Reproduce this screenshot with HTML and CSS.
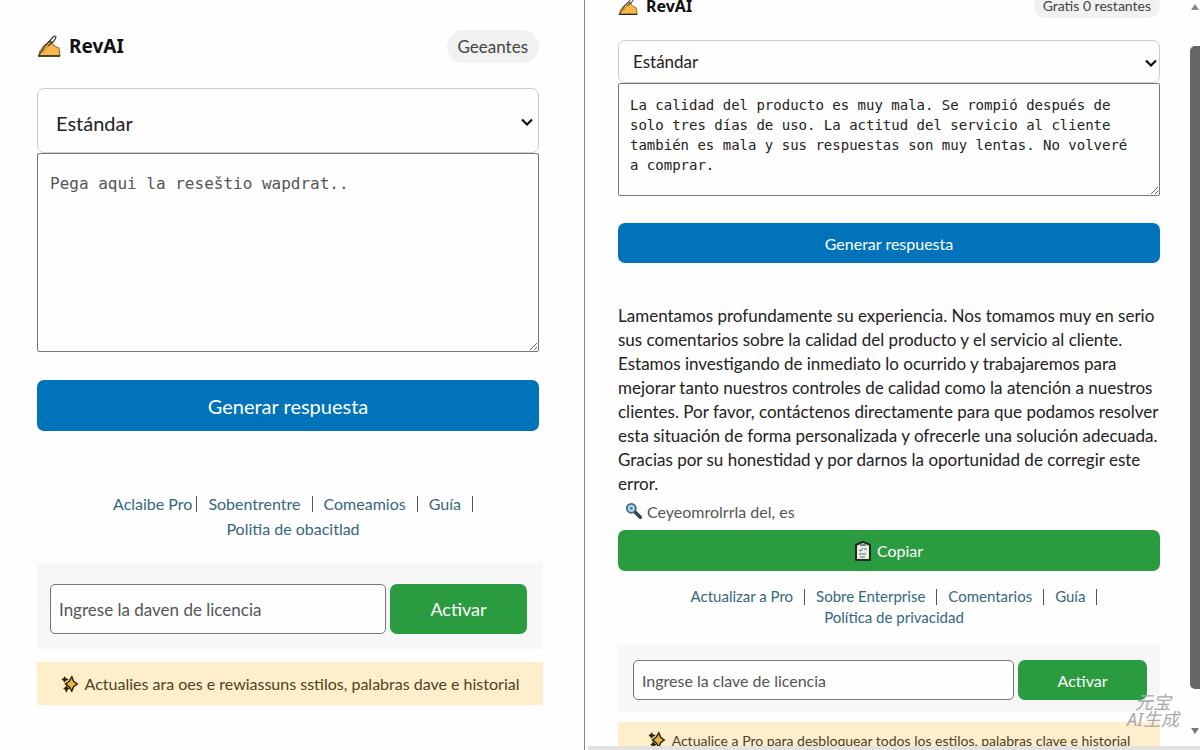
FILE: index.html
```html
<!DOCTYPE html>
<html lang="es">

<head>
    <meta charset="UTF-8">
    <title>RevAI</title>
    <link rel="stylesheet" href="styles.css">
</head>

<body>
    <svg class="sprite" aria-hidden="true">
        <symbol id="hand" viewBox="0 0 24 24">
            <path d="M2 21 L3 17 Q6 11 12 8 L16 10 L17 12 L22 14 L23 22 L2 22 Z" fill="#f5b84b" stroke="#8a6427" stroke-width="1" stroke-linejoin="round" />
            <path d="M1 22 H23" stroke="#29231b" stroke-width="1.5" />
            <path d="M2 21 Q6 16 8 12 L16 3 Q18 1 19 3 L17 7 L11 12 M13 7 L16 9" fill="none" stroke="#39342c" stroke-width="1.2" />
            <path d="M6 18 Q9 15 11 12" fill="none" stroke="#c38325" stroke-width="1" />
        </symbol>
        <symbol id="chevron" viewBox="0 0 12 8">
            <path d="M1 1.5 L6 6.5 L11 1.5" fill="none" stroke="#111" stroke-width="2.2" />
        </symbol>
        <symbol id="spark" viewBox="0 0 20 20">
            <path d="M12 2 L14 7 L18 10 L14 13 L12 18 L9 13 L5 10 L9 7 Z" fill="#e9b63c" stroke="#2b2109" stroke-width="1.6" />
            <path d="M4 2 L5 4 L8 5 L5 6 L4 8 L3 6 L1 5 L3 4 Z M6 12 L7 14 L9 15 L7 16 L6 19 L5 16 L3 15 L5 14 Z" fill="#2b2109" stroke="#2b2109" />
        </symbol>
    </svg>

    <div class="screens">
        <main class="panel panel-left">
            <header>
                <h1><svg class="hand"><use href="#hand" /></svg>RevAI</h1>
                <span class="quota">Geeantes</span>
            </header>
            <form>
                <div class="select-wrap">
                    <select aria-label="Estilo">
                        <option>Estándar</option>
                    </select>
                    <svg class="chevron"><use href="#chevron" /></svg>
                </div>
                <textarea aria-label="Reseña" placeholder="Pega aqui la reseštio wapdrat.."></textarea>
                <button type="button" class="generate">Generar respuesta</button>
            </form>
            <nav>
                <div><a href="#">Aclaibe Pro</a><i class="sep tight"></i><a href="#">Sobentrentre</a><i class="sep"></i><a href="#">Comeamios</a><i class="sep"></i><a href="#">Guía</a><i class="sep"></i></div>
                <div><a href="#">Politia de obacitlad</a></div>
            </nav>
            <div class="license">
                <input type="text" aria-label="Licencia" placeholder="Ingrese la daven de licencia">
                <button type="button">Activar</button>
            </div>
            <p class="upsell"><svg class="spark"><use href="#spark" /></svg>Actualies ara oes e rewiassuns sstilos, palabras dave e historial</p>
        </main>

        <section class="panel panel-right">
            <header>
                <h1><svg class="hand"><use href="#hand" /></svg>RevAI</h1>
                <span class="quota">Gratis 0 restantes</span>
            </header>
            <form>
                <div class="select-wrap">
                    <select aria-label="Estilo">
                        <option>Estándar</option>
                    </select>
                    <svg class="chevron"><use href="#chevron" /></svg>
                </div>
                <textarea aria-label="Reseña">La calidad del producto es muy mala. Se rompió después de
solo tres días de uso. La actitud del servicio al cliente
también es mala y sus respuestas son muy lentas. No volveré
a comprar.</textarea>
                <button type="button" class="generate">Generar respuesta</button>
            </form>
            <p class="answer">Lamentamos profundamente su experiencia. Nos tomamos muy en serio<br>
                sus comentarios sobre la calidad del producto y el servicio al cliente.<br>
                Estamos investigando de inmediato lo ocurrido y trabajaremos para<br>
                mejorar tanto nuestros controles de calidad como la atención a nuestros<br>
                clientes. Por favor, contáctenos directamente para que podamos resolver<br>
                esta situación de forma personalizada y ofrecerle una solución adecuada.<br>
                Gracias por su honestidad y por darnos la oportunidad de corregir este<br>
                error.</p>
            <p class="keywords">
                <svg class="lens" viewBox="0 0 20 20">
                    <path d="M10 10 L17 17" stroke="#34424c" stroke-width="4" stroke-linecap="round" />
                    <circle cx="7" cy="7" r="5" fill="#a9d5ef" stroke="#3f6681" stroke-width="2" />
                    <circle cx="7" cy="7" r="1.5" fill="#4d83a8" />
                </svg>Ceyeomrolrrla del, es
            </p>
            <button type="button" class="copy">
                <svg class="clip" viewBox="0 0 16 20">
                    <path d="M1 4 L5 2 L8 1 L11 2 L15 4 V19 H1 Z" fill="#e9ece4" stroke="#1e2d20" stroke-width="2" stroke-linejoin="round" />
                    <path d="M5 4 H11" stroke="#1e2d20" stroke-width="1" />
                    <path d="M4 9 L6 10 L8 7 M9 8 H12 M4 13 H11 M5 16 H10" fill="none" stroke="#666d65" />
                </svg>Copiar
            </button>
            <nav>
                <div><a href="#">Actualizar a Pro</a><i class="sep"></i><a href="#">Sobre Enterprise</a><i class="sep"></i><a href="#">Comentarios</a><i class="sep"></i><a href="#">Guía</a><i class="sep"></i></div>
                <div><a href="#">Política de privacidad</a></div>
            </nav>
            <div class="license">
                <input type="text" aria-label="Licencia" placeholder="Ingrese la clave de licencia">
                <button type="button">Activar</button>
            </div>
            <p class="upsell"><svg class="spark"><use href="#spark" /></svg>Actualice a Pro para desbloquear todos los estilos, palabras clave e historial</p>
        </section>
    </div>

    <div class="scrollbar"><span class="up"></span><span class="thumb"></span><span class="down"></span></div>
    <div class="bottom-bar"></div>
    <div class="watermark">元宝<br>AI生成</div>
</body>

</html>
```
FILE: styles.css
```css
* {
    box-sizing: border-box;
}

body {
    margin: 0;
    font-family: Lato, "Noto Sans", sans-serif;
    color: #222;
    background: #fefefe;
    overflow: hidden;
}

.sprite {
    display: none;
}

.screens {
    display: grid;
    grid-template-columns: 585fr 615fr;
    height: 100vh;
}

.panel {
    overflow: hidden;
    min-width: 0;
}

.panel-left {
    padding: 28px 45px 0 37px;
    border-right: 1px solid #888;
}

.panel-right {
    padding: 0 40px 0 33px;
}

header {
    display: flex;
    align-items: center;
    justify-content: space-between;
    height: 36px;
}

h1 {
    display: flex;
    align-items: center;
    gap: 8px;
    margin: 0;
    font-family: "Noto Sans", sans-serif;
    font-size: 19px;
    color: #111;
}

.hand {
    width: 24px;
    height: 24px;
}

.quota {
    padding: 0 11px;
    border-radius: 17px;
    background: #f0f1f1;
    color: #444;
    font-size: 17px;
    line-height: 33px;
}

form {
    margin-top: 24px;
}

.select-wrap {
    position: relative;
}

select {
    display: block;
    width: 100%;
    height: 65px;
    padding: 4px 18px 0;
    appearance: none;
    border: 1px solid #ccc;
    border-radius: 7px;
    background: #fefefe;
    font-family: inherit;
    font-size: 20px;
    color: #222;
}

.chevron {
    position: absolute;
    right: 6px;
    top: 50%;
    width: 12px;
    height: 8px;
    margin-top: -3px;
}

textarea {
    display: block;
    width: 100%;
    height: 199px;
    padding: 18px 12px;
    border: 1px solid #777;
    border-radius: 2px;
    background: #fefefe;
    font-family: "DejaVu Sans Mono", monospace;
    font-size: 16px;
    line-height: 24px;
    color: #222;
    resize: vertical;
    overflow: hidden;
}

textarea::placeholder,
input::placeholder {
    color: #555;
    opacity: 1;
}

button {
    border: none;
    border-radius: 7px;
    color: #fff;
    background: #2b9b40;
    font-family: inherit;
    cursor: pointer;
}

.generate {
    display: block;
    width: 100%;
    height: 51px;
    margin-top: 28px;
    background: #0073bb;
    font-size: 20px;
}

nav {
    margin-top: 60px;
    padding-left: 10px;
    text-align: center;
    font-size: 16px;
    line-height: 25px;
}

nav div {
    display: flex;
    align-items: center;
    justify-content: center;
    white-space: nowrap;
}

a {
    color: #34687d;
    text-decoration: none;
}

.sep {
    width: 1px;
    height: 16px;
    margin: 0 11px;
    background: #555;
}

.panel-left .sep.tight {
    margin-left: 4px;
}

nav .sep:last-child {
    margin-right: 0;
}

.license {
    display: flex;
    gap: 4px;
    margin-top: 22px;
    padding: 21px 16px 15px 13px;
    background: #f7f7f7;
}

.license input {
    flex: 1;
    min-width: 0;
    height: 50px;
    padding: 0 8px;
    border: 1px solid #777;
    border-radius: 5px;
    background: #fefefe;
    font-family: inherit;
    font-size: 17px;
}

.license button {
    width: 137px;
    height: 50px;
    font-size: 18px;
}

.upsell {
    display: flex;
    align-items: center;
    justify-content: center;
    gap: 6px;
    height: 43px;
    margin: 13px 0 0;
    background: #feeecb;
    color: #4e4223;
    font-size: 16px;
    white-space: nowrap;
}

.panel-left .license,
.panel-left .upsell {
    margin-right: -4px;
}

.spark {
    flex: none;
    width: 18px;
    height: 20px;
}

/* scrolled panel */
.panel-right header {
    height: 32px;
    margin-top: -10px;
}

.panel-right h1 {
    font-size: 16px;
}

.panel-right .hand {
    width: 20px;
    height: 20px;
}

.panel-right .quota {
    padding: 0 9px;
    font-size: 14px;
    line-height: 24px;
}

.panel-right form {
    margin-top: 18px;
}

.panel-right select {
    height: 43px;
    padding: 0 14px;
    font-size: 17px;
}

.panel-right .chevron {
    right: 3px;
}

.panel-right textarea {
    height: 113px;
    padding: 11px;
    font-size: 14px;
    line-height: 20px;
}

.panel-right .generate {
    height: 40px;
    margin-top: 27px;
    font-size: 16px;
}

.answer {
    margin: 41px 0 0;
    font-size: 17px;
    line-height: 24px;
    white-space: nowrap;
}

.keywords {
    display: flex;
    align-items: center;
    gap: 4px;
    height: 30px;
    margin: 0;
    padding-left: 7px;
    color: #555;
    font-size: 16px;
}

.lens {
    width: 18px;
    height: 18px;
}

.copy {
    display: flex;
    align-items: center;
    justify-content: center;
    gap: 6px;
    width: 100%;
    height: 41px;
    margin-top: 4px;
    font-size: 16px;
}

.clip {
    width: 16px;
    height: 20px;
}

.panel-right nav {
    margin-top: 15px;
    font-size: 15px;
    line-height: 21px;
}

.panel-right .license {
    margin-top: 17px;
    padding: 15px 13px 12px 15px;
}

.panel-right .license input {
    height: 40px;
    font-size: 16px;
}

.panel-right .license button {
    width: 129px;
    height: 40px;
    font-size: 16px;
}

.panel-right .upsell {
    height: 36px;
    margin-top: 10px;
    font-size: 14px;
}

.scrollbar {
    position: absolute;
    top: 0;
    right: 0;
    bottom: 0;
    display: flex;
    flex-direction: column;
    align-items: center;
    width: 10px;
    padding: 4px 0 16px;
}

.thumb {
    flex: 1;
    width: 100%;
    margin: 36px 0 39px;
    border-radius: 5px 0 0 5px;
    background: #666;
}

.up,
.down {
    border: 4px solid transparent;
}

.up {
    border-top: none;
    border-bottom: 6px solid #888;
}

.down {
    border-bottom: none;
    border-top: 6px solid #777;
}

.bottom-bar {
    position: absolute;
    left: 49%;
    right: 0;
    bottom: 0;
    height: 4px;
    background: #e2e2e2;
}

.watermark {
    position: absolute;
    right: 21px;
    bottom: 22px;
    color: #aaa;
    font-family: "Noto Sans", "Noto Sans CJK SC", sans-serif;
    font-size: 18px;
    font-style: italic;
    line-height: 17px;
    text-align: center;
}
```
